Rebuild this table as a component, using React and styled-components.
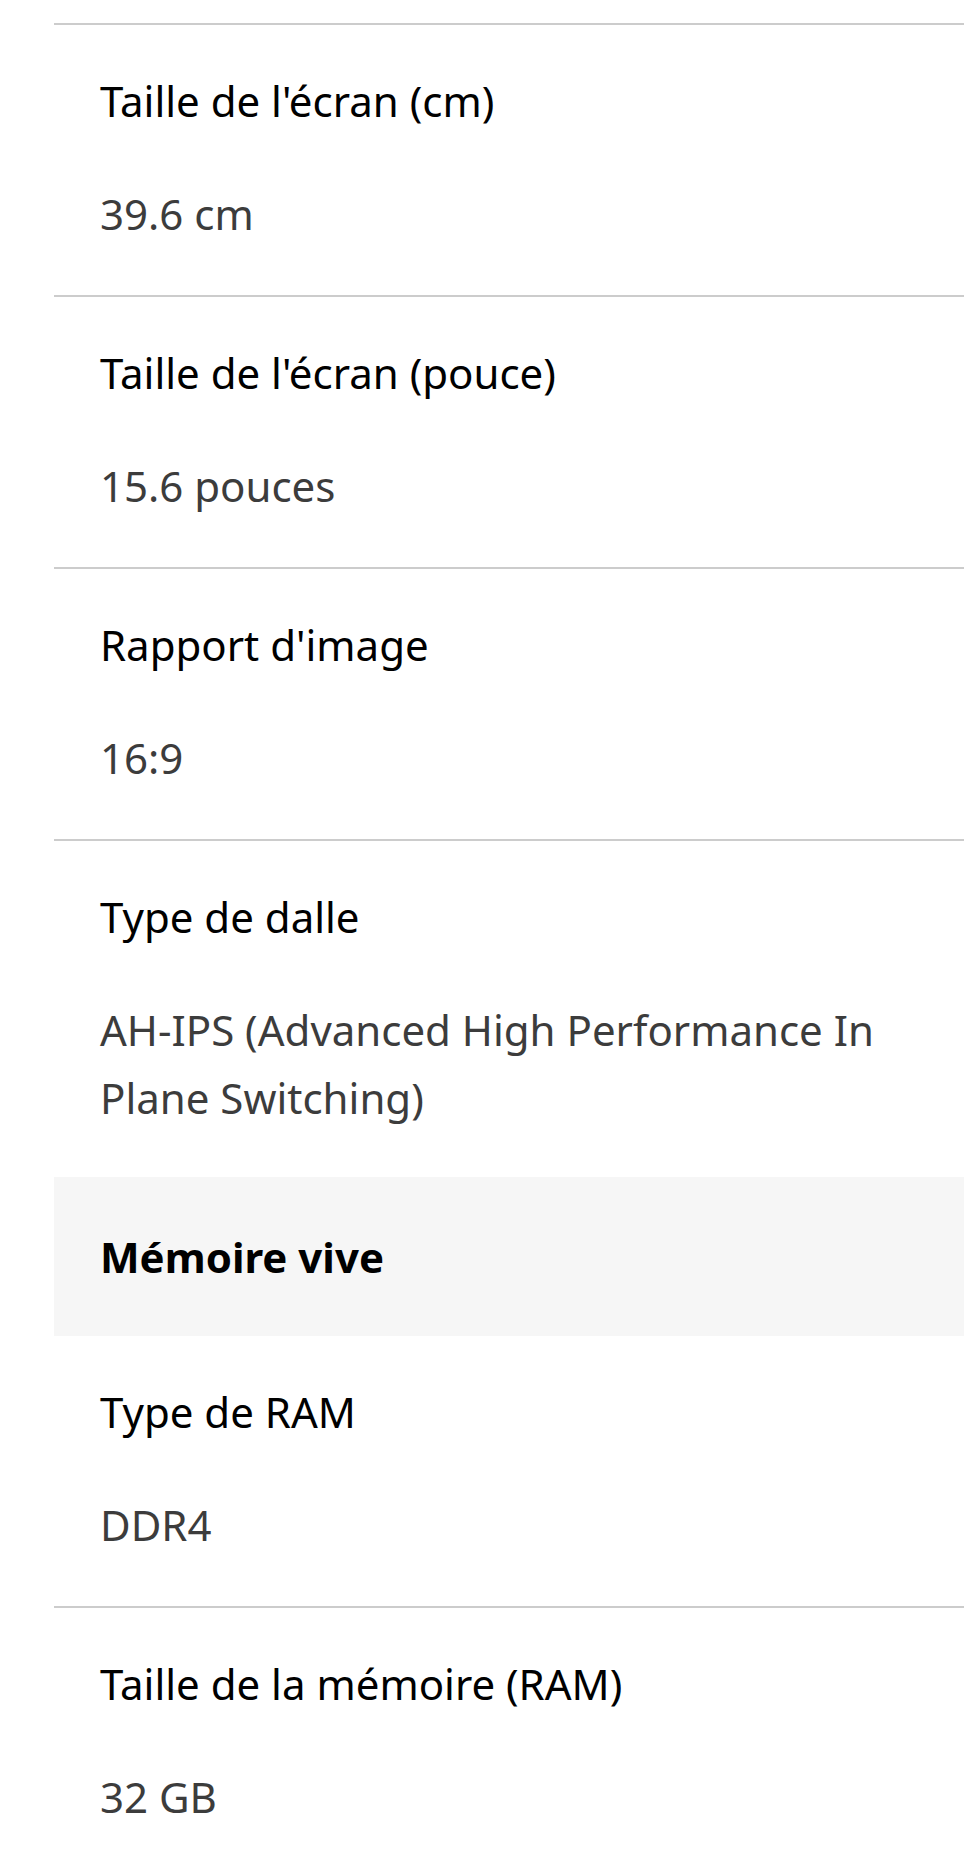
import React from 'react';
import styled, { createGlobalStyle } from 'styled-components';

const GlobalStyle = createGlobalStyle`
  html, body {
    margin: 0;
    padding: 0;
    background: #ffffff;
  }
  body {
    font-family: 'Noto Sans', 'Open Sans', sans-serif;
    -webkit-font-smoothing: antialiased;
  }
`;

const Page = styled.div`
  padding-left: 54px;
  overflow: hidden;
`;

const SpecList = styled.dl`
  margin: 23px 0 0;
  border-top: 2px solid #cccccc;
`;

const SpecRow = styled.div`
  padding: 42px 46px ${({ $last }) => ($last ? '45px' : '47px')};
  border-bottom: ${({ $last }) => ($last ? 'none' : '2px solid #cccccc')};
`;

const Label = styled.dt`
  margin: 0;
  font-size: 42px;
  line-height: 68px;
  font-weight: 400;
  color: #000000;
`;

const Value = styled.dd`
  margin: 45px 0 0;
  font-size: 42px;
  line-height: 68px;
  color: #3c3c3c;
`;

const SectionHeader = styled.div`
  display: flex;
  align-items: center;
  height: 159px;
  padding: 0 46px;
  background: #f6f6f6;
`;

const SectionTitle = styled.h3`
  margin: 0;
  font-size: 42px;
  line-height: 68px;
  font-weight: 700;
  color: #000000;
`;

const display = [
  { label: "Taille de l'écran (cm)", value: '39.6 cm' },
  { label: "Taille de l'écran (pouce)", value: '15.6 pouces' },
  { label: "Rapport d'image", value: '16:9' },
  { label: 'Type de dalle', value: 'AH-IPS (Advanced High Performance In Plane Switching)' },
];

const memory = [
  { label: 'Type de RAM', value: 'DDR4' },
  { label: 'Taille de la mémoire (RAM)', value: '32 GB' },
];

const Spec = ({ label, value, last }) => (
  <SpecRow $last={last}>
    <Label>{label}</Label>
    <Value>{value}</Value>
  </SpecRow>
);

const App = () => (
  <Page>
    <GlobalStyle />
    <SpecList>
      {display.map((s, i) => (
        <Spec key={s.label} {...s} last={i === display.length - 1} />
      ))}
      <SectionHeader>
        <SectionTitle>Mémoire vive</SectionTitle>
      </SectionHeader>
      {memory.map((s) => (
        <Spec key={s.label} {...s} />
      ))}
    </SpecList>
  </Page>
);

export default App;
